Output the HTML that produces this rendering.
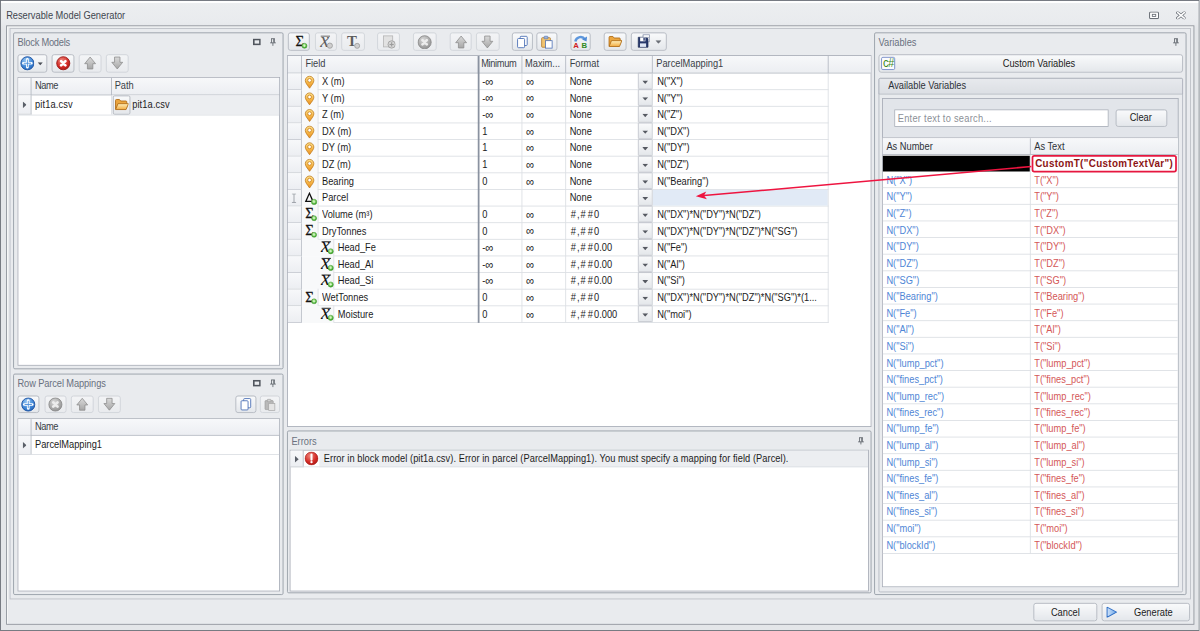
<!DOCTYPE html>
<html><head><meta charset="utf-8"><title>Reservable Model Generator</title>
<style>
html,body{margin:0;padding:0;width:1200px;height:631px;overflow:hidden;background:#e9ebee}
#w{position:absolute;left:0;top:0;width:1371.43px;height:721.15px;transform:scale(.875);transform-origin:0 0;
 font-family:"Liberation Sans",sans-serif;font-size:11.5px;color:#1c1c1c;background:#e9ebee;overflow:hidden}
#w div,#w svg{position:absolute;box-sizing:border-box}
.t{white-space:nowrap;height:16px;line-height:16px;transform:scaleX(.9217);transform-origin:0 50%}
.cap{color:#6a7180}
.win{border:1.3px solid #676c73;background:linear-gradient(#fff 0,#fff 2.2px,#eceef0 2.6px,#e9ebee 24px,#e4e6e9 32px,#e4e6e9 100%)}
.fr1{border:1.1px solid #8e939b;box-shadow:inset 1px 1px 0 #f6f7f8;background:#e9ebee}
.fr2{border:1px solid #bcc0c7}
.pn{border:1px solid #959ba5;border-radius:2px;background:#e9ebee}
.gr{border:1px solid #a9aeb8;background:#fff}
.hd{background:linear-gradient(#f7f8fa,#eceef2);border-bottom:1px solid #b4b9c2}
.hc{border-right:1px solid #b4b9c2}
.btn{border:1px solid #b3b8c0;border-radius:3px;background:linear-gradient(#f9fafb,#e4e7eb)}
.btd{border:1px solid #d0d3d9;border-radius:3px;background:linear-gradient(#f3f4f6,#e9ebee)}
.ind{background:linear-gradient(#f7f8fa,#eceef2);border-right:1px solid #b4b9c2;border-bottom:1px solid #c5c9d0}
.hl{background:#dcdfe4}
.vl{background:#dcdfe4}
.nb{color:#4f86d6}
.tr{color:#d45757}
.inf{font-size:14.2px;line-height:10px;position:relative;top:.6px}
.h{padding:0 1.3px}

</style></head>
<body>
<div id="w">
<svg class="i" width="0" height="0" style="left:0;top:0"><defs>
<radialGradient id="gB" cx=".4" cy=".3" r=".8"><stop offset="0" stop-color="#9ccbf5"/><stop offset=".6" stop-color="#3f86d6"/><stop offset="1" stop-color="#1f5fb4"/></radialGradient>
<radialGradient id="gR" cx=".4" cy=".3" r=".8"><stop offset="0" stop-color="#f08a80"/><stop offset=".6" stop-color="#d32a25"/><stop offset="1" stop-color="#a51512"/></radialGradient>
<radialGradient id="gG" cx=".4" cy=".3" r=".8"><stop offset="0" stop-color="#d6d6d6"/><stop offset=".6" stop-color="#a9a9a9"/><stop offset="1" stop-color="#8e8e8e"/></radialGradient>
<radialGradient id="gGr" cx=".4" cy=".3" r=".8"><stop offset="0" stop-color="#b8ec9a"/><stop offset=".7" stop-color="#4fb23a"/><stop offset="1" stop-color="#2f8a22"/></radialGradient>
<linearGradient id="gO" x1="0" y1="0" x2="0" y2="1"><stop offset="0" stop-color="#fde28e"/><stop offset=".55" stop-color="#f6b445"/><stop offset="1" stop-color="#ea8f22"/></linearGradient>
<linearGradient id="gF" x1="0" y1="0" x2="0" y2="1"><stop offset="0" stop-color="#fff0bd"/><stop offset="1" stop-color="#f2ad42"/></linearGradient>
<linearGradient id="gP" x1="0" y1="0" x2="1" y2="0"><stop offset="0" stop-color="#cfe3fa"/><stop offset="1" stop-color="#6ea6e6"/></linearGradient>
<linearGradient id="gA" x1="0" y1="0" x2="0" y2="1"><stop offset="0" stop-color="#dadada"/><stop offset="1" stop-color="#a6a6a6"/></linearGradient>
</defs></svg>
<div class="win" style="left:0.00px;top:0.00px;width:1371.43px;height:721.15px;"></div>
<div class="t " style="left:7.00px;top:10.30px;color:#41464e">Reservable Model Generator</div>
<svg class="i" style="left:1312.80px;top:12.57px" width="11.77" height="9.14" viewBox="0 0 12 9.2"><rect x=".8" y=".8" width="10.4" height="7.6" rx="1.2" fill="#fff" stroke="#6a6f77" stroke-width="1.2"/><rect x="4" y="3.4" width="4" height="2.4" fill="#fff" stroke="#6a6f77" stroke-width="1"/></svg>
<svg class="i" style="left:1344.00px;top:12.57px" width="11.43" height="9.14" viewBox="0 0 12 10.2"><path d="M1.8 1.6l8.4 7M10.2 1.6l-8.4 7" stroke="#6a6f77" stroke-width="3.8" stroke-linecap="square"/><path d="M1.8 1.6l8.4 7M10.2 1.6l-8.4 7" stroke="#fff" stroke-width="2" stroke-linecap="square"/></svg>
<div class="fr1" style="left:7.09px;top:29.03px;width:1357.71px;height:685.26px;"></div>
<div class="fr2" style="left:10.51px;top:32.46px;width:1350.63px;height:652.57px;"></div>
<div class="pn" style="left:14.97px;top:36.91px;width:308.91px;height:385.03px;"></div>
<div class="t cap" style="left:20.11px;top:40.66px;;letter-spacing:-0.28px;">Block Models</div>
<svg class="i" style="left:308.34px;top:43.43px" width="7.77" height="9.83" viewBox="0 0 9 11"><path d="M2.2 1.2h4.8M2.7 1.2v5.4M6.4 1.2v5.4M5.6 1.6v4.6M.8 6.7h7.6M4.5 6.7v4" fill="none" stroke="#50555d" stroke-width="1"/></svg>
<svg class="i" style="left:289.37px;top:44.11px" width="9.14" height="7.89" viewBox="0 0 9 7.6"><rect x="1" y="1" width="7" height="5.6" fill="none" stroke="#50555d" stroke-width="1.9"/></svg>
<div class="btn" style="left:19.66px;top:61.94px;width:34.29px;height:20.69px;"></div>
<svg class="i" style="left:22.56px;top:64.39px" width="16.60" height="16.60" viewBox="0 0 16 16"><circle cx="8" cy="8" r="7.2" fill="url(#gB)" stroke="#2458a6" stroke-width="1.1"/><path d="M8 3.6v8.8M3.6 8h8.8" stroke="#fff" stroke-width="3" stroke-linecap="round"/><path d="M8 4.4v7.2M4.4 8h7.2" stroke="#4d8fdc" stroke-width="1" stroke-linecap="round"/></svg>
<svg class="i" style="left:42.97px;top:71.09px" width="6.00" height="3.60" viewBox="0 0 6 3.4"><path d="M0 0h6L3 3.4z" fill="#4c5058"/></svg>
<div class="btn" style="left:59.43px;top:61.94px;width:25.60px;height:20.69px;"></div>
<svg class="i" style="left:63.93px;top:64.39px" width="16.60" height="16.60" viewBox="0 0 16 16"><circle cx="8" cy="8" r="7.2" fill="url(#gR)" stroke="#9b1a17" stroke-width="1"/><path d="M5.6 5.6l4.8 4.8M10.4 5.6l-4.8 4.8" stroke="#fff" stroke-width="2.9" stroke-linecap="round"/></svg>
<div class="btd" style="left:90.29px;top:61.94px;width:25.60px;height:20.69px;"></div>
<svg class="i" style="left:95.09px;top:64.29px" width="16.00" height="16.00" viewBox="0 0 16 16"><path d="M8 1.2L14.2 8.8H11.1V14.8H4.9V8.8H1.8z" fill="url(#gA)" stroke="#8e8e8e" stroke-width=".9" stroke-linejoin="round"/></svg>
<div class="btd" style="left:121.14px;top:61.94px;width:25.60px;height:20.69px;"></div>
<svg class="i" style="left:125.94px;top:64.29px" width="16.00" height="16.00" viewBox="0 0 16 16"><path d="M8 14.8L14.2 7.2H11.1V1.2H4.9V7.2H1.8z" fill="url(#gA)" stroke="#8e8e8e" stroke-width=".9" stroke-linejoin="round"/></svg>
<div class="gr" style="left:19.54px;top:88.00px;width:300.23px;height:329.83px;"></div>
<div class="hd" style="left:20.54px;top:89.00px;width:298.23px;height:20.00px;"></div>
<div class="hc" style="left:20.54px;top:89.00px;width:15.23px;height:20.00px;"></div>
<div class="hc" style="left:20.54px;top:89.00px;width:107.57px;height:20.00px;"></div>
<div class="t " style="left:40.00px;top:89.69px;color:#3a3f47;letter-spacing:-0.5px;">Name</div>
<div class="t " style="left:131.43px;top:89.69px;color:#3a3f47">Path</div>
<div class="ind" style="left:20.54px;top:109.00px;width:15.23px;height:22.40px;"></div>
<svg class="i" style="left:25.94px;top:116.20px" width="4.40" height="7.60" viewBox="0 0 4 7"><path d="M0 0v7L4 3.5z" fill="#5a5f68"/></svg>
<div class="" style="left:128.11px;top:109.00px;width:190.66px;height:22.40px;background:#eceef1"></div>
<div class="hl" style="left:20.54px;top:131.20px;width:298.23px;height:1.00px;"></div>
<div class="vl" style="left:127.11px;top:109.00px;width:1.00px;height:22.40px;"></div>
<div class="btn" style="left:129.14px;top:108.80px;width:20.11px;height:21.94px;border-radius:2px"></div>
<svg class="i" style="left:130.90px;top:111.47px" width="16.60" height="16.60" viewBox="0 0 16 16"><path d="M1 13.4V3.6a1 1 0 0 1 1-1h3.3l1.4 1.7h5.7a1 1 0 0 1 1 1V7.4" fill="#eba63f" stroke="#b36f1a" stroke-width="1"/><path d="M1.1 13.7L3.7 7.2h11.6l-2.7 6.5z" fill="url(#gF)" stroke="#b36f1a" stroke-width="1" stroke-linejoin="round"/></svg>
<div class="t " style="left:40.00px;top:111.40px;;letter-spacing:0.16px;">pit1a.csv</div>
<div class="t " style="left:151.31px;top:111.40px;;letter-spacing:0.16px;">pit1a.csv</div>
<div class="pn" style="left:14.97px;top:426.74px;width:308.91px;height:252.80px;"></div>
<div class="t cap" style="left:20.11px;top:430.49px;;letter-spacing:-0.13px;">Row Parcel Mappings</div>
<svg class="i" style="left:308.34px;top:433.26px" width="7.77" height="9.83" viewBox="0 0 9 11"><path d="M2.2 1.2h4.8M2.7 1.2v5.4M6.4 1.2v5.4M5.6 1.6v4.6M.8 6.7h7.6M4.5 6.7v4" fill="none" stroke="#50555d" stroke-width="1"/></svg>
<svg class="i" style="left:289.37px;top:433.94px" width="9.14" height="7.89" viewBox="0 0 9 7.6"><rect x="1" y="1" width="7" height="5.6" fill="none" stroke="#50555d" stroke-width="1.9"/></svg>
<div class="btn" style="left:19.89px;top:452.11px;width:25.60px;height:20.34px;"></div>
<svg class="i" style="left:24.39px;top:454.39px" width="16.60" height="16.60" viewBox="0 0 16 16"><circle cx="8" cy="8" r="7.2" fill="url(#gB)" stroke="#2458a6" stroke-width="1.1"/><path d="M8 3.6v8.8M3.6 8h8.8" stroke="#fff" stroke-width="3" stroke-linecap="round"/><path d="M8 4.4v7.2M4.4 8h7.2" stroke="#4d8fdc" stroke-width="1" stroke-linecap="round"/></svg>
<div class="btd" style="left:50.74px;top:452.11px;width:25.60px;height:20.34px;"></div>
<svg class="i" style="left:55.24px;top:454.39px" width="16.60" height="16.60" viewBox="0 0 16 16"><circle cx="8" cy="8" r="7.2" fill="url(#gG)" stroke="#8c8c8c" stroke-width="1"/><path d="M5.6 5.6l4.8 4.8M10.4 5.6l-4.8 4.8" stroke="#ececec" stroke-width="2.9" stroke-linecap="round"/></svg>
<div class="btd" style="left:81.37px;top:452.11px;width:25.60px;height:20.34px;"></div>
<svg class="i" style="left:86.17px;top:454.29px" width="16.00" height="16.00" viewBox="0 0 16 16"><path d="M8 1.2L14.2 8.8H11.1V14.8H4.9V8.8H1.8z" fill="url(#gA)" stroke="#8e8e8e" stroke-width=".9" stroke-linejoin="round"/></svg>
<div class="btd" style="left:112.23px;top:452.11px;width:25.83px;height:20.34px;"></div>
<svg class="i" style="left:117.14px;top:454.29px" width="16.00" height="16.00" viewBox="0 0 16 16"><path d="M8 14.8L14.2 7.2H11.1V1.2H4.9V7.2H1.8z" fill="url(#gA)" stroke="#8e8e8e" stroke-width=".9" stroke-linejoin="round"/></svg>
<div class="btn" style="left:268.57px;top:452.11px;width:24.69px;height:20.34px;"></div>
<svg class="i" style="left:272.91px;top:454.29px" width="16.00" height="16.00" viewBox="0 0 16 16"><rect x="5.5" y="1.5" width="8" height="10.5" rx="1" fill="#fff" stroke="#4a6fb5" stroke-width="1"/><rect x="2.5" y="4" width="8" height="10.5" rx="1" fill="#fff" stroke="#4a6fb5" stroke-width="1"/></svg>
<div class="btd" style="left:296.69px;top:452.11px;width:23.09px;height:20.34px;"></div>
<svg class="i" style="left:300.73px;top:454.79px" width="15.00" height="15.00" viewBox="0 0 16 16"><rect x="2" y="3" width="10" height="11" rx="1" fill="#b9b9b9" stroke="#999" stroke-width=".8"/><rect x="4.8" y="1.4" width="4.4" height="3" rx=".8" fill="#d0d0d0" stroke="#999" stroke-width=".7"/><rect x="6.5" y="6.5" width="7.5" height="8.5" fill="#e4e4e4" stroke="#a4a4a4" stroke-width=".8"/></svg>
<div class="gr" style="left:19.54px;top:477.71px;width:300.23px;height:198.51px;"></div>
<div class="hd" style="left:20.54px;top:478.71px;width:298.23px;height:19.11px;"></div>
<div class="hc" style="left:20.54px;top:478.71px;width:15.23px;height:19.11px;"></div>
<div class="t " style="left:40.00px;top:479.17px;color:#3a3f47;letter-spacing:-0.5px;">Name</div>
<div class="ind" style="left:20.54px;top:497.83px;width:15.23px;height:22.63px;"></div>
<svg class="i" style="left:25.94px;top:505.43px" width="4.40" height="7.60" viewBox="0 0 4 7"><path d="M0 0v7L4 3.5z" fill="#5a5f68"/></svg>
<div class="hl" style="left:20.54px;top:519.46px;width:298.23px;height:1.00px;"></div>
<div class="t " style="left:40.00px;top:500.43px;">ParcelMapping1</div>
<div class="btn" style="left:328.57px;top:36.91px;width:25.71px;height:21.37px;"></div>
<svg class="i" style="left:334.73px;top:39.10px" width="17.00" height="17.00" viewBox="0 0 16 16"><text x="2.6" y="12.8" font-family="Liberation Serif,serif" font-size="16" fill="#111" stroke="#111" stroke-width=".3">Σ</text><circle cx="12.2" cy="12.6" r="2.7" fill="url(#gGr)" stroke="#3c9a2c" stroke-width=".5"/><path d="M10.899999999999999 12.6h2.6M12.2 11.299999999999999v2.6" stroke="#e9ffe0" stroke-width=".7"/></svg>
<div class="btd" style="left:359.54px;top:36.91px;width:25.60px;height:21.37px;"></div>
<svg class="i" style="left:363.84px;top:39.10px" width="17.00" height="17.00" viewBox="0 0 16 16"><path d="M2.4 2.2h10" stroke="#5e5e5e" stroke-width="1"/><text x="1.8" y="13.4" font-family="Liberation Serif,serif" font-style="italic" font-size="21.5" fill="#5e5e5e">x</text><circle cx="12.2" cy="12.4" r="2.8" fill="#cfcfcf" stroke="#9d9d9d" stroke-width=".9"/></svg>
<div class="btd" style="left:390.29px;top:36.91px;width:26.29px;height:21.37px;"></div>
<svg class="i" style="left:394.93px;top:39.10px" width="17.00" height="17.00" viewBox="0 0 16 16"><text x="1.4" y="13" font-family="Liberation Serif,serif" font-weight="bold" font-size="16" fill="#5c5c5c">T</text><circle cx="12.4" cy="12.6" r="2.7" fill="#cfcfcf" stroke="#9d9d9d" stroke-width=".9"/></svg>
<div class="btd" style="left:431.43px;top:36.91px;width:25.71px;height:21.37px;"></div>
<svg class="i" style="left:435.69px;top:39.60px" width="16.00" height="16.00" viewBox="0 0 16 16"><rect x="2.2" y="1" width="10.6" height="12.6" fill="#e2e2e2" stroke="#b4b4b4" stroke-width=".9"/><circle cx="11.6" cy="10.8" r="4.2" fill="#d4d4d4" stroke="#9a9a9a" stroke-width=".9"/><path d="M9.2 10.8h4.8M11.6 8.4v4.8" stroke="#9c9c9c" stroke-width="1.3"/></svg>
<div class="btd" style="left:472.00px;top:36.91px;width:26.86px;height:21.37px;"></div>
<svg class="i" style="left:477.13px;top:39.70px" width="16.60" height="16.60" viewBox="0 0 16 16"><circle cx="8" cy="8" r="7.2" fill="url(#gG)" stroke="#8c8c8c" stroke-width="1"/><path d="M5.6 5.6l4.8 4.8M10.4 5.6l-4.8 4.8" stroke="#ececec" stroke-width="2.9" stroke-linecap="round"/></svg>
<div class="btd" style="left:513.60px;top:36.91px;width:25.83px;height:21.37px;"></div>
<svg class="i" style="left:518.51px;top:39.60px" width="16.00" height="16.00" viewBox="0 0 16 16"><path d="M8 1.2L14.2 8.8H11.1V14.8H4.9V8.8H1.8z" fill="url(#gA)" stroke="#8e8e8e" stroke-width=".9" stroke-linejoin="round"/></svg>
<div class="btd" style="left:544.00px;top:36.91px;width:26.74px;height:21.37px;"></div>
<svg class="i" style="left:549.37px;top:39.60px" width="16.00" height="16.00" viewBox="0 0 16 16"><path d="M8 14.8L14.2 7.2H11.1V1.2H4.9V7.2H1.8z" fill="url(#gA)" stroke="#8e8e8e" stroke-width=".9" stroke-linejoin="round"/></svg>
<div class="btn" style="left:585.14px;top:36.91px;width:23.54px;height:21.37px;"></div>
<svg class="i" style="left:588.91px;top:39.60px" width="16.00" height="16.00" viewBox="0 0 16 16"><rect x="5.5" y="1.5" width="8" height="10.5" rx="1" fill="#fff" stroke="#4a6fb5" stroke-width="1"/><rect x="2.5" y="4" width="8" height="10.5" rx="1" fill="#fff" stroke="#4a6fb5" stroke-width="1"/></svg>
<div class="btn" style="left:613.26px;top:36.91px;width:23.31px;height:21.37px;"></div>
<svg class="i" style="left:616.91px;top:39.60px" width="16.00" height="16.00" viewBox="0 0 16 16"><rect x="2" y="3" width="10" height="11" rx="1" fill="#f2c470" stroke="#b07a2e" stroke-width=".9"/><rect x="4.8" y="1.4" width="4.4" height="3" rx=".8" fill="#9fb4d6" stroke="#4a6fb5" stroke-width=".7"/><rect x="6.5" y="6.5" width="7.5" height="8.5" fill="#fff" stroke="#4a6fb5" stroke-width=".9"/></svg>
<div class="btn" style="left:651.77px;top:36.91px;width:23.66px;height:21.37px;"></div>
<svg class="i" style="left:655.35px;top:39.35px" width="16.50" height="16.50" viewBox="0 0 16 16"><path d="M2.4 8.2C3.6 2.6 10.4 1.6 13 5.8" fill="none" stroke="#5e97dd" stroke-width="2.7"/><path d="M15.4 2.6l-.5 5.6-5-2.2z" fill="#4f8bd6"/><text x=".2" y="15.8" font-family="Liberation Sans,sans-serif" font-weight="bold" font-size="8.6" fill="#cf2020">A</text><text x="9.4" y="15.8" font-family="Liberation Sans,sans-serif" font-weight="bold" font-size="8.6" fill="#2f8a22">B</text></svg>
<div class="btn" style="left:689.71px;top:36.91px;width:26.63px;height:21.37px;"></div>
<svg class="i" style="left:694.78px;top:39.35px" width="16.50" height="16.50" viewBox="0 0 16 16"><path d="M1 13.4V3.6a1 1 0 0 1 1-1h3.3l1.4 1.7h5.7a1 1 0 0 1 1 1V7.4" fill="#eba63f" stroke="#b36f1a" stroke-width="1"/><path d="M1.1 13.7L3.7 7.2h11.6l-2.7 6.5z" fill="url(#gF)" stroke="#b36f1a" stroke-width="1" stroke-linejoin="round"/></svg>
<div class="btn" style="left:720.57px;top:36.91px;width:41.71px;height:21.37px;"></div>
<svg class="i" style="left:727.54px;top:39.09px" width="16.00" height="16.00" viewBox="0 0 16 16"><rect x="7" y=".8" width="7.4" height="8" fill="#fff" stroke="#8a94ad" stroke-width=".8"/><path d="M1.4 3.6h9.6L12.6 5V15H1.4z" fill="#27386b" stroke="#1b2950" stroke-width=".7"/><rect x="3.6" y="3.8" width="6" height="4.4" fill="#fff"/><rect x="7.3" y="4.3" width="1.6" height="3.2" fill="#27386b"/><rect x="3.4" y="10.6" width="7" height="4" fill="#dfe6f4"/><rect x="7" y=".8" width="7.4" height="2.8" fill="#fff" stroke="#8a94ad" stroke-width=".8"/></svg>
<svg class="i" style="left:748.80px;top:46.17px" width="7.00" height="4.00" viewBox="0 0 6 3.4"><path d="M0 0h6L3 3.4z" fill="#6c7078"/></svg>
<div class="gr" style="left:328.34px;top:63.09px;width:667.66px;height:424.91px;"></div>
<div class="hd" style="left:329.34px;top:64.09px;width:665.66px;height:19.80px;"></div>
<div class="" style="left:343.69px;top:64.09px;width:1.00px;height:19.80px;background:#b4b9c2"></div>
<div class="" style="left:546.43px;top:64.09px;width:1.00px;height:19.80px;background:#b4b9c2"></div>
<div class="" style="left:596.14px;top:64.09px;width:1.00px;height:19.80px;background:#b4b9c2"></div>
<div class="" style="left:645.63px;top:64.09px;width:1.00px;height:19.80px;background:#b4b9c2"></div>
<div class="" style="left:745.06px;top:64.09px;width:1.00px;height:19.80px;background:#b4b9c2"></div>
<div class="" style="left:945.74px;top:64.09px;width:1.00px;height:19.80px;background:#b4b9c2"></div>
<div class="t " style="left:348.57px;top:64.43px;color:#3a3f47">Field</div>
<div class="t " style="left:550.40px;top:64.43px;color:#3a3f47;letter-spacing:-0.45px;">Minimum</div>
<div class="t " style="left:600.46px;top:64.43px;color:#3a3f47">Maxim...</div>
<div class="t " style="left:650.74px;top:64.43px;color:#3a3f47">Format</div>
<div class="t " style="left:750.40px;top:64.43px;color:#3a3f47">ParcelMapping1</div>
<div class="ind" style="left:329.34px;top:83.89px;width:15.34px;height:19.00px;"></div>
<div class="" style="left:344.69px;top:83.89px;width:18.74px;height:19.00px;background:#f8f9fa"></div>
<div class="vl" style="left:362.93px;top:83.39px;width:1.00px;height:19.00px;"></div>
<div class="hl" style="left:363.43px;top:101.89px;width:583.31px;height:1.00px;"></div>
<svg class="i" style="left:345.89px;top:85.99px" width="15.60" height="15.60" viewBox="0 0 16 16"><path d="M8 15.2C5.2 11.2 3 8.8 3 6.2a5 5 0 0 1 10 0c0 2.6-2.2 5-5 9z" fill="url(#gO)" stroke="#bf7a1c" stroke-width=".9"/><circle cx="8" cy="6" r="2.2" fill="#fff" stroke="#cf8a24" stroke-width="1.1"/></svg>
<div class="t " style="left:367.63px;top:84.99px;">X (m)</div>
<div class="t " style="left:550.63px;top:84.99px;">-<span class="inf">∞</span></div>
<div class="t " style="left:600.69px;top:84.99px;"><span class="inf">∞</span></div>
<div class="t " style="left:650.97px;top:84.99px;">None</div>
<div class="t " style="left:750.63px;top:84.99px;">N("X")</div>
<div class="btn" style="left:729.49px;top:83.29px;width:16.57px;height:19.20px;border-radius:1px;border-color:#c0c4cb"></div>
<svg class="i" style="left:734.31px;top:91.79px" width="6.80" height="4.00" viewBox="0 0 6 3.4"><path d="M0 0h6L3 3.4z" fill="#565a62"/></svg>
<div class="ind" style="left:329.34px;top:102.89px;width:15.34px;height:19.00px;"></div>
<div class="" style="left:344.69px;top:102.89px;width:18.74px;height:19.00px;background:#f8f9fa"></div>
<div class="vl" style="left:362.93px;top:102.39px;width:1.00px;height:19.00px;"></div>
<div class="hl" style="left:363.43px;top:120.89px;width:583.31px;height:1.00px;"></div>
<svg class="i" style="left:345.89px;top:104.99px" width="15.60" height="15.60" viewBox="0 0 16 16"><path d="M8 15.2C5.2 11.2 3 8.8 3 6.2a5 5 0 0 1 10 0c0 2.6-2.2 5-5 9z" fill="url(#gO)" stroke="#bf7a1c" stroke-width=".9"/><circle cx="8" cy="6" r="2.2" fill="#fff" stroke="#cf8a24" stroke-width="1.1"/></svg>
<div class="t " style="left:367.63px;top:103.99px;">Y (m)</div>
<div class="t " style="left:550.63px;top:103.99px;">-<span class="inf">∞</span></div>
<div class="t " style="left:600.69px;top:103.99px;"><span class="inf">∞</span></div>
<div class="t " style="left:650.97px;top:103.99px;">None</div>
<div class="t " style="left:750.63px;top:103.99px;">N("Y")</div>
<div class="btn" style="left:729.49px;top:102.29px;width:16.57px;height:19.20px;border-radius:1px;border-color:#c0c4cb"></div>
<svg class="i" style="left:734.31px;top:110.79px" width="6.80" height="4.00" viewBox="0 0 6 3.4"><path d="M0 0h6L3 3.4z" fill="#565a62"/></svg>
<div class="ind" style="left:329.34px;top:121.89px;width:15.34px;height:19.00px;"></div>
<div class="" style="left:344.69px;top:121.89px;width:18.74px;height:19.00px;background:#f8f9fa"></div>
<div class="vl" style="left:362.93px;top:121.39px;width:1.00px;height:19.00px;"></div>
<div class="hl" style="left:363.43px;top:139.89px;width:583.31px;height:1.00px;"></div>
<svg class="i" style="left:345.89px;top:123.99px" width="15.60" height="15.60" viewBox="0 0 16 16"><path d="M8 15.2C5.2 11.2 3 8.8 3 6.2a5 5 0 0 1 10 0c0 2.6-2.2 5-5 9z" fill="url(#gO)" stroke="#bf7a1c" stroke-width=".9"/><circle cx="8" cy="6" r="2.2" fill="#fff" stroke="#cf8a24" stroke-width="1.1"/></svg>
<div class="t " style="left:367.63px;top:122.99px;">Z (m)</div>
<div class="t " style="left:550.63px;top:122.99px;">-<span class="inf">∞</span></div>
<div class="t " style="left:600.69px;top:122.99px;"><span class="inf">∞</span></div>
<div class="t " style="left:650.97px;top:122.99px;">None</div>
<div class="t " style="left:750.63px;top:122.99px;">N("Z")</div>
<div class="btn" style="left:729.49px;top:121.29px;width:16.57px;height:19.20px;border-radius:1px;border-color:#c0c4cb"></div>
<svg class="i" style="left:734.31px;top:129.79px" width="6.80" height="4.00" viewBox="0 0 6 3.4"><path d="M0 0h6L3 3.4z" fill="#565a62"/></svg>
<div class="ind" style="left:329.34px;top:140.89px;width:15.34px;height:19.00px;"></div>
<div class="" style="left:344.69px;top:140.89px;width:18.74px;height:19.00px;background:#f8f9fa"></div>
<div class="vl" style="left:362.93px;top:140.39px;width:1.00px;height:19.00px;"></div>
<div class="hl" style="left:363.43px;top:158.89px;width:583.31px;height:1.00px;"></div>
<svg class="i" style="left:345.89px;top:142.99px" width="15.60" height="15.60" viewBox="0 0 16 16"><path d="M8 15.2C5.2 11.2 3 8.8 3 6.2a5 5 0 0 1 10 0c0 2.6-2.2 5-5 9z" fill="url(#gO)" stroke="#bf7a1c" stroke-width=".9"/><circle cx="8" cy="6" r="2.2" fill="#fff" stroke="#cf8a24" stroke-width="1.1"/></svg>
<div class="t " style="left:367.63px;top:141.99px;">DX (m)</div>
<div class="t " style="left:550.63px;top:141.99px;">1</div>
<div class="t " style="left:600.69px;top:141.99px;"><span class="inf">∞</span></div>
<div class="t " style="left:650.97px;top:141.99px;">None</div>
<div class="t " style="left:750.63px;top:141.99px;">N("DX")</div>
<div class="btn" style="left:729.49px;top:140.29px;width:16.57px;height:19.20px;border-radius:1px;border-color:#c0c4cb"></div>
<svg class="i" style="left:734.31px;top:148.79px" width="6.80" height="4.00" viewBox="0 0 6 3.4"><path d="M0 0h6L3 3.4z" fill="#565a62"/></svg>
<div class="ind" style="left:329.34px;top:159.89px;width:15.34px;height:19.00px;"></div>
<div class="" style="left:344.69px;top:159.89px;width:18.74px;height:19.00px;background:#f8f9fa"></div>
<div class="vl" style="left:362.93px;top:159.39px;width:1.00px;height:19.00px;"></div>
<div class="hl" style="left:363.43px;top:177.89px;width:583.31px;height:1.00px;"></div>
<svg class="i" style="left:345.89px;top:161.99px" width="15.60" height="15.60" viewBox="0 0 16 16"><path d="M8 15.2C5.2 11.2 3 8.8 3 6.2a5 5 0 0 1 10 0c0 2.6-2.2 5-5 9z" fill="url(#gO)" stroke="#bf7a1c" stroke-width=".9"/><circle cx="8" cy="6" r="2.2" fill="#fff" stroke="#cf8a24" stroke-width="1.1"/></svg>
<div class="t " style="left:367.63px;top:160.99px;">DY (m)</div>
<div class="t " style="left:550.63px;top:160.99px;">1</div>
<div class="t " style="left:600.69px;top:160.99px;"><span class="inf">∞</span></div>
<div class="t " style="left:650.97px;top:160.99px;">None</div>
<div class="t " style="left:750.63px;top:160.99px;">N("DY")</div>
<div class="btn" style="left:729.49px;top:159.29px;width:16.57px;height:19.20px;border-radius:1px;border-color:#c0c4cb"></div>
<svg class="i" style="left:734.31px;top:167.79px" width="6.80" height="4.00" viewBox="0 0 6 3.4"><path d="M0 0h6L3 3.4z" fill="#565a62"/></svg>
<div class="ind" style="left:329.34px;top:178.89px;width:15.34px;height:19.00px;"></div>
<div class="" style="left:344.69px;top:178.89px;width:18.74px;height:19.00px;background:#f8f9fa"></div>
<div class="vl" style="left:362.93px;top:178.39px;width:1.00px;height:19.00px;"></div>
<div class="hl" style="left:363.43px;top:196.89px;width:583.31px;height:1.00px;"></div>
<svg class="i" style="left:345.89px;top:180.99px" width="15.60" height="15.60" viewBox="0 0 16 16"><path d="M8 15.2C5.2 11.2 3 8.8 3 6.2a5 5 0 0 1 10 0c0 2.6-2.2 5-5 9z" fill="url(#gO)" stroke="#bf7a1c" stroke-width=".9"/><circle cx="8" cy="6" r="2.2" fill="#fff" stroke="#cf8a24" stroke-width="1.1"/></svg>
<div class="t " style="left:367.63px;top:179.99px;">DZ (m)</div>
<div class="t " style="left:550.63px;top:179.99px;">1</div>
<div class="t " style="left:600.69px;top:179.99px;"><span class="inf">∞</span></div>
<div class="t " style="left:650.97px;top:179.99px;">None</div>
<div class="t " style="left:750.63px;top:179.99px;">N("DZ")</div>
<div class="btn" style="left:729.49px;top:178.29px;width:16.57px;height:19.20px;border-radius:1px;border-color:#c0c4cb"></div>
<svg class="i" style="left:734.31px;top:186.79px" width="6.80" height="4.00" viewBox="0 0 6 3.4"><path d="M0 0h6L3 3.4z" fill="#565a62"/></svg>
<div class="ind" style="left:329.34px;top:197.89px;width:15.34px;height:19.00px;"></div>
<div class="" style="left:344.69px;top:197.89px;width:18.74px;height:19.00px;background:#f8f9fa"></div>
<div class="vl" style="left:362.93px;top:197.39px;width:1.00px;height:19.00px;"></div>
<div class="hl" style="left:363.43px;top:215.89px;width:583.31px;height:1.00px;"></div>
<svg class="i" style="left:345.89px;top:199.99px" width="15.60" height="15.60" viewBox="0 0 16 16"><path d="M8 15.2C5.2 11.2 3 8.8 3 6.2a5 5 0 0 1 10 0c0 2.6-2.2 5-5 9z" fill="url(#gO)" stroke="#bf7a1c" stroke-width=".9"/><circle cx="8" cy="6" r="2.2" fill="#fff" stroke="#cf8a24" stroke-width="1.1"/></svg>
<div class="t " style="left:367.63px;top:198.99px;">Bearing</div>
<div class="t " style="left:550.63px;top:198.99px;">0</div>
<div class="t " style="left:600.69px;top:198.99px;"><span class="inf">∞</span></div>
<div class="t " style="left:650.97px;top:198.99px;">None</div>
<div class="t " style="left:750.63px;top:198.99px;">N("Bearing")</div>
<div class="btn" style="left:729.49px;top:197.29px;width:16.57px;height:19.20px;border-radius:1px;border-color:#c0c4cb"></div>
<svg class="i" style="left:734.31px;top:205.79px" width="6.80" height="4.00" viewBox="0 0 6 3.4"><path d="M0 0h6L3 3.4z" fill="#565a62"/></svg>
<div class="ind" style="left:329.34px;top:216.89px;width:15.34px;height:19.00px;"></div>
<div class="" style="left:344.69px;top:216.89px;width:18.74px;height:19.00px;background:#f8f9fa"></div>
<div class="vl" style="left:362.93px;top:216.39px;width:1.00px;height:19.00px;"></div>
<div class="hl" style="left:363.43px;top:234.89px;width:583.31px;height:1.00px;"></div>
<div class="" style="left:746.06px;top:216.89px;width:199.69px;height:18.00px;background:#e1eaf6"></div>
<svg class="i" style="left:346.49px;top:218.29px" width="17.00" height="17.00" viewBox="0 0 16 16"><path d="M7.2 1L12.2 12H2.2zM7.2 4.2L4.4 10.7h5.4z" fill="#111" fill-rule="evenodd"/><circle cx="12.2" cy="12" r="2.9" fill="url(#gGr)" stroke="#3c9a2c" stroke-width=".5"/><path d="M10.899999999999999 12h2.6M12.2 10.7v2.6" stroke="#e9ffe0" stroke-width=".7"/></svg>
<div class="t " style="left:367.63px;top:217.99px;">Parcel</div>
<div class="t " style="left:650.97px;top:217.99px;">None</div>
<div class="btn" style="left:729.49px;top:216.29px;width:16.57px;height:19.20px;border-radius:1px;border-color:#c0c4cb"></div>
<svg class="i" style="left:734.31px;top:224.79px" width="6.80" height="4.00" viewBox="0 0 6 3.4"><path d="M0 0h6L3 3.4z" fill="#565a62"/></svg>
<div class="ind" style="left:329.34px;top:235.89px;width:15.34px;height:19.00px;"></div>
<div class="" style="left:344.69px;top:235.89px;width:18.74px;height:19.00px;background:#f8f9fa"></div>
<div class="vl" style="left:362.93px;top:235.39px;width:1.00px;height:19.00px;"></div>
<div class="hl" style="left:363.43px;top:253.89px;width:583.31px;height:1.00px;"></div>
<svg class="i" style="left:346.49px;top:236.29px" width="17.00" height="17.00" viewBox="0 0 16 16"><text x="2.6" y="12.8" font-family="Liberation Serif,serif" font-size="16" fill="#111" stroke="#111" stroke-width=".3">Σ</text><circle cx="12.2" cy="12.6" r="2.7" fill="url(#gGr)" stroke="#3c9a2c" stroke-width=".5"/><path d="M10.899999999999999 12.6h2.6M12.2 11.299999999999999v2.6" stroke="#e9ffe0" stroke-width=".7"/></svg>
<div class="t " style="left:367.63px;top:236.99px;">Volume (m³)</div>
<div class="t " style="left:550.63px;top:236.99px;">0</div>
<div class="t " style="left:600.69px;top:236.99px;"><span class="inf">∞</span></div>
<div class="t " style="left:650.97px;top:236.99px;"><span class="h">#</span>,<span class="h">#</span><span class="h">#</span>0</div>
<div class="t " style="left:750.63px;top:236.99px;">N("DX")*N("DY")*N("DZ")</div>
<div class="btn" style="left:729.49px;top:235.29px;width:16.57px;height:19.20px;border-radius:1px;border-color:#c0c4cb"></div>
<svg class="i" style="left:734.31px;top:243.79px" width="6.80" height="4.00" viewBox="0 0 6 3.4"><path d="M0 0h6L3 3.4z" fill="#565a62"/></svg>
<div class="ind" style="left:329.34px;top:254.89px;width:15.34px;height:19.00px;"></div>
<div class="" style="left:344.69px;top:254.89px;width:18.74px;height:19.00px;background:#f8f9fa"></div>
<div class="vl" style="left:362.93px;top:254.39px;width:1.00px;height:19.00px;"></div>
<div class="hl" style="left:363.43px;top:272.89px;width:583.31px;height:1.00px;"></div>
<svg class="i" style="left:346.49px;top:255.29px" width="17.00" height="17.00" viewBox="0 0 16 16"><text x="2.6" y="12.8" font-family="Liberation Serif,serif" font-size="16" fill="#111" stroke="#111" stroke-width=".3">Σ</text><circle cx="12.2" cy="12.6" r="2.7" fill="url(#gGr)" stroke="#3c9a2c" stroke-width=".5"/><path d="M10.899999999999999 12.6h2.6M12.2 11.299999999999999v2.6" stroke="#e9ffe0" stroke-width=".7"/></svg>
<div class="t " style="left:367.63px;top:255.99px;">DryTonnes</div>
<div class="t " style="left:550.63px;top:255.99px;">0</div>
<div class="t " style="left:600.69px;top:255.99px;"><span class="inf">∞</span></div>
<div class="t " style="left:650.97px;top:255.99px;"><span class="h">#</span>,<span class="h">#</span><span class="h">#</span>0</div>
<div class="t " style="left:750.63px;top:255.99px;">N("DX")*N("DY")*N("DZ")*N("SG")</div>
<div class="btn" style="left:729.49px;top:254.29px;width:16.57px;height:19.20px;border-radius:1px;border-color:#c0c4cb"></div>
<svg class="i" style="left:734.31px;top:262.79px" width="6.80" height="4.00" viewBox="0 0 6 3.4"><path d="M0 0h6L3 3.4z" fill="#565a62"/></svg>
<div class="ind" style="left:329.34px;top:273.89px;width:15.34px;height:19.00px;"></div>
<div class="" style="left:344.69px;top:273.89px;width:36.34px;height:19.00px;background:#f8f9fa"></div>
<div class="vl" style="left:380.53px;top:273.39px;width:1.00px;height:19.00px;"></div>
<div class="hl" style="left:381.03px;top:291.89px;width:565.71px;height:1.00px;"></div>
<svg class="i" style="left:365.19px;top:274.29px" width="17.00" height="17.00" viewBox="0 0 16 16"><path d="M2.4 2.2h10" stroke="#111" stroke-width="1"/><text x="1.8" y="13.4" font-family="Liberation Serif,serif" font-style="italic" font-size="21.5" fill="#111">x</text><circle cx="12.2" cy="12.4" r="2.8" fill="url(#gGr)" stroke="#3c9a2c" stroke-width=".5"/><path d="M10.899999999999999 12.4h2.6M12.2 11.1v2.6" stroke="#e9ffe0" stroke-width=".7"/></svg>
<div class="t " style="left:386.37px;top:274.99px;">Head_Fe</div>
<div class="t " style="left:550.63px;top:274.99px;">-<span class="inf">∞</span></div>
<div class="t " style="left:600.69px;top:274.99px;"><span class="inf">∞</span></div>
<div class="t " style="left:650.97px;top:274.99px;"><span class="h">#</span>,<span class="h">#</span><span class="h">#</span>0.00</div>
<div class="t " style="left:750.63px;top:274.99px;">N("Fe")</div>
<div class="btn" style="left:729.49px;top:273.29px;width:16.57px;height:19.20px;border-radius:1px;border-color:#c0c4cb"></div>
<svg class="i" style="left:734.31px;top:281.79px" width="6.80" height="4.00" viewBox="0 0 6 3.4"><path d="M0 0h6L3 3.4z" fill="#565a62"/></svg>
<div class="ind" style="left:329.34px;top:292.89px;width:15.34px;height:19.00px;"></div>
<div class="" style="left:344.69px;top:292.89px;width:36.34px;height:19.00px;background:#f8f9fa"></div>
<div class="vl" style="left:380.53px;top:292.39px;width:1.00px;height:19.00px;"></div>
<div class="hl" style="left:381.03px;top:310.89px;width:565.71px;height:1.00px;"></div>
<svg class="i" style="left:365.19px;top:293.29px" width="17.00" height="17.00" viewBox="0 0 16 16"><path d="M2.4 2.2h10" stroke="#111" stroke-width="1"/><text x="1.8" y="13.4" font-family="Liberation Serif,serif" font-style="italic" font-size="21.5" fill="#111">x</text><circle cx="12.2" cy="12.4" r="2.8" fill="url(#gGr)" stroke="#3c9a2c" stroke-width=".5"/><path d="M10.899999999999999 12.4h2.6M12.2 11.1v2.6" stroke="#e9ffe0" stroke-width=".7"/></svg>
<div class="t " style="left:386.37px;top:293.99px;">Head_Al</div>
<div class="t " style="left:550.63px;top:293.99px;">-<span class="inf">∞</span></div>
<div class="t " style="left:600.69px;top:293.99px;"><span class="inf">∞</span></div>
<div class="t " style="left:650.97px;top:293.99px;"><span class="h">#</span>,<span class="h">#</span><span class="h">#</span>0.00</div>
<div class="t " style="left:750.63px;top:293.99px;">N("Al")</div>
<div class="btn" style="left:729.49px;top:292.29px;width:16.57px;height:19.20px;border-radius:1px;border-color:#c0c4cb"></div>
<svg class="i" style="left:734.31px;top:300.79px" width="6.80" height="4.00" viewBox="0 0 6 3.4"><path d="M0 0h6L3 3.4z" fill="#565a62"/></svg>
<div class="ind" style="left:329.34px;top:311.89px;width:15.34px;height:19.00px;"></div>
<div class="" style="left:344.69px;top:311.89px;width:36.34px;height:19.00px;background:#f8f9fa"></div>
<div class="vl" style="left:380.53px;top:311.39px;width:1.00px;height:19.00px;"></div>
<div class="hl" style="left:381.03px;top:329.89px;width:565.71px;height:1.00px;"></div>
<svg class="i" style="left:365.19px;top:312.29px" width="17.00" height="17.00" viewBox="0 0 16 16"><path d="M2.4 2.2h10" stroke="#111" stroke-width="1"/><text x="1.8" y="13.4" font-family="Liberation Serif,serif" font-style="italic" font-size="21.5" fill="#111">x</text><circle cx="12.2" cy="12.4" r="2.8" fill="url(#gGr)" stroke="#3c9a2c" stroke-width=".5"/><path d="M10.899999999999999 12.4h2.6M12.2 11.1v2.6" stroke="#e9ffe0" stroke-width=".7"/></svg>
<div class="t " style="left:386.37px;top:312.99px;">Head_Si</div>
<div class="t " style="left:550.63px;top:312.99px;">-<span class="inf">∞</span></div>
<div class="t " style="left:600.69px;top:312.99px;"><span class="inf">∞</span></div>
<div class="t " style="left:650.97px;top:312.99px;"><span class="h">#</span>,<span class="h">#</span><span class="h">#</span>0.00</div>
<div class="t " style="left:750.63px;top:312.99px;">N("Si")</div>
<div class="btn" style="left:729.49px;top:311.29px;width:16.57px;height:19.20px;border-radius:1px;border-color:#c0c4cb"></div>
<svg class="i" style="left:734.31px;top:319.79px" width="6.80" height="4.00" viewBox="0 0 6 3.4"><path d="M0 0h6L3 3.4z" fill="#565a62"/></svg>
<div class="ind" style="left:329.34px;top:330.89px;width:15.34px;height:19.00px;"></div>
<div class="" style="left:344.69px;top:330.89px;width:18.74px;height:19.00px;background:#f8f9fa"></div>
<div class="vl" style="left:362.93px;top:330.39px;width:1.00px;height:19.00px;"></div>
<div class="hl" style="left:363.43px;top:348.89px;width:583.31px;height:1.00px;"></div>
<svg class="i" style="left:346.49px;top:331.29px" width="17.00" height="17.00" viewBox="0 0 16 16"><text x="2.6" y="12.8" font-family="Liberation Serif,serif" font-size="16" fill="#111" stroke="#111" stroke-width=".3">Σ</text><circle cx="12.2" cy="12.6" r="2.7" fill="url(#gGr)" stroke="#3c9a2c" stroke-width=".5"/><path d="M10.899999999999999 12.6h2.6M12.2 11.299999999999999v2.6" stroke="#e9ffe0" stroke-width=".7"/></svg>
<div class="t " style="left:367.63px;top:331.99px;">WetTonnes</div>
<div class="t " style="left:550.63px;top:331.99px;">0</div>
<div class="t " style="left:600.69px;top:331.99px;"><span class="inf">∞</span></div>
<div class="t " style="left:650.97px;top:331.99px;"><span class="h">#</span>,<span class="h">#</span><span class="h">#</span>0</div>
<div class="t " style="left:750.63px;top:331.99px;">N("DX")*N("DY")*N("DZ")*N("SG")*(1...</div>
<div class="btn" style="left:729.49px;top:330.29px;width:16.57px;height:19.20px;border-radius:1px;border-color:#c0c4cb"></div>
<svg class="i" style="left:734.31px;top:338.79px" width="6.80" height="4.00" viewBox="0 0 6 3.4"><path d="M0 0h6L3 3.4z" fill="#565a62"/></svg>
<div class="ind" style="left:329.34px;top:349.89px;width:15.34px;height:19.00px;"></div>
<div class="" style="left:344.69px;top:349.89px;width:36.34px;height:19.00px;background:#f8f9fa"></div>
<div class="vl" style="left:380.53px;top:349.39px;width:1.00px;height:19.00px;"></div>
<div class="hl" style="left:381.03px;top:367.89px;width:565.71px;height:1.00px;"></div>
<svg class="i" style="left:365.19px;top:350.29px" width="17.00" height="17.00" viewBox="0 0 16 16"><path d="M2.4 2.2h10" stroke="#111" stroke-width="1"/><text x="1.8" y="13.4" font-family="Liberation Serif,serif" font-style="italic" font-size="21.5" fill="#111">x</text><circle cx="12.2" cy="12.4" r="2.8" fill="url(#gGr)" stroke="#3c9a2c" stroke-width=".5"/><path d="M10.899999999999999 12.4h2.6M12.2 11.1v2.6" stroke="#e9ffe0" stroke-width=".7"/></svg>
<div class="t " style="left:386.37px;top:350.99px;">Moisture</div>
<div class="t " style="left:550.63px;top:350.99px;">0</div>
<div class="t " style="left:600.69px;top:350.99px;"><span class="inf">∞</span></div>
<div class="t " style="left:650.97px;top:350.99px;"><span class="h">#</span>,<span class="h">#</span><span class="h">#</span>0.000</div>
<div class="t " style="left:750.63px;top:350.99px;">N("moi")</div>
<div class="btn" style="left:729.49px;top:349.29px;width:16.57px;height:19.20px;border-radius:1px;border-color:#c0c4cb"></div>
<svg class="i" style="left:734.31px;top:357.79px" width="6.80" height="4.00" viewBox="0 0 6 3.4"><path d="M0 0h6L3 3.4z" fill="#565a62"/></svg>
<svg class="i" style="left:333.46px;top:220.89px" width="6.00" height="11.00" viewBox="0 0 6 11"><path d="M.6.6h4.8M3 .6v9.8M.6 10.4h4.8" stroke="#8d929a" stroke-width=".9" fill="none"/></svg>
<div class="" style="left:545.74px;top:64.09px;width:1.90px;height:304.80px;background:#8a92a0"></div>
<div class="vl" style="left:596.14px;top:83.89px;width:1.00px;height:285.00px;"></div>
<div class="vl" style="left:645.63px;top:83.89px;width:1.00px;height:285.00px;"></div>
<div class="vl" style="left:745.06px;top:83.89px;width:1.00px;height:285.00px;"></div>
<div class="vl" style="left:945.74px;top:83.89px;width:1.00px;height:285.00px;"></div>
<div class="pn" style="left:328.34px;top:492.00px;width:667.43px;height:185.94px;"></div>
<div class="t cap" style="left:333.49px;top:495.74px;">Errors</div>
<svg class="i" style="left:980.23px;top:498.51px" width="7.77" height="9.83" viewBox="0 0 9 11"><path d="M2.2 1.2h4.8M2.7 1.2v5.4M6.4 1.2v5.4M5.6 1.6v4.6M.8 6.7h7.6M4.5 6.7v4" fill="none" stroke="#50555d" stroke-width="1"/></svg>
<div class="gr" style="left:330.63px;top:514.29px;width:662.40px;height:161.60px;"></div>
<div class="ind" style="left:331.63px;top:515.29px;width:14.89px;height:19.11px;"></div>
<svg class="i" style="left:337.23px;top:521.49px" width="4.40" height="7.60" viewBox="0 0 4 7"><path d="M0 0v7L4 3.5z" fill="#5a5f68"/></svg>
<div class="" style="left:364.80px;top:515.29px;width:627.23px;height:19.11px;background:#eceef1"></div>
<div class="hl" style="left:331.63px;top:533.40px;width:660.40px;height:1.00px;"></div>
<svg class="i" style="left:348.23px;top:516.34px" width="16.00" height="16.00" viewBox="0 0 16 16"><circle cx="8" cy="8" r="7.4" fill="url(#gR)" stroke="#a31512" stroke-width=".7"/><path d="M8 3.4v6" stroke="#fff" stroke-width="2.4" stroke-linecap="round"/><circle cx="8" cy="12.1" r="1.35" fill="#fff"/></svg>
<div class="t " style="left:369.60px;top:515.74px;;letter-spacing:0.07px;">Error in block model (pit1a.csv). Error in parcel (ParcelMapping1). You must specify a mapping for field (Parcel).</div>
<div class="pn" style="left:999.20px;top:36.91px;width:356.57px;height:643.09px;"></div>
<div class="t cap" style="left:1004.34px;top:40.66px;">Variables</div>
<svg class="i" style="left:1340.23px;top:43.43px" width="7.77" height="9.83" viewBox="0 0 9 11"><path d="M2.2 1.2h4.8M2.7 1.2v5.4M6.4 1.2v5.4M5.6 1.6v4.6M.8 6.7h7.6M4.5 6.7v4" fill="none" stroke="#50555d" stroke-width="1"/></svg>
<div class="btn" style="left:1003.89px;top:62.17px;width:348.11px;height:21.14px;"></div>
<div class="" style="left:1006.86px;top:65.14px;width:15.77px;height:14.40px;border:1px solid #6f86c4;border-radius:2px;background:#fbfcff"></div>
<div class="t " style="left:1008.69px;top:62.94px;color:#3f8a1e;font-size:14px;letter-spacing:-.6px">c#</div>
<div class="t " style="left:1146.06px;top:63.86px;">Custom Variables</div>
<div class="" style="left:1003.89px;top:88.69px;width:347.66px;height:587.89px;border:1px solid #b3b8c1;border-radius:2px;background:#e9ebee"></div>
<div class="" style="left:1003.89px;top:88.69px;width:347.66px;height:19.20px;border:1px solid #b3b8c1;border-radius:2px 2px 0 0;background:linear-gradient(#e7e9ed,#dcdfe4)"></div>
<div class="t " style="left:1014.86px;top:90.49px;color:#2e3238">Available Variables</div>
<div class="" style="left:1008.46px;top:112.00px;width:338.97px;height:559.09px;border:1px solid #a9aeb8;background:#e2e5ea"></div>
<div class="" style="left:1022.06px;top:125.49px;width:245.14px;height:19.09px;border:1px solid #aab0ba;background:#fff"></div>
<div class="t " style="left:1026.29px;top:126.71px;color:#8c9097;letter-spacing:0.32px;">Enter text to search...</div>
<div class="btn" style="left:1274.51px;top:125.49px;width:59.89px;height:19.09px;"></div>
<div class="t " style="left:1290.97px;top:126.49px;">Clear</div>
<div class="" style="left:1009.46px;top:157.03px;width:336.97px;height:513.37px;background:#fff;border-top:1px solid #a9aeb8"></div>
<div class="hd" style="left:1009.46px;top:158.03px;width:336.97px;height:19.11px;"></div>
<div class="" style="left:1176.94px;top:158.03px;width:1.00px;height:19.11px;background:#b4b9c2"></div>
<div class="t " style="left:1012.80px;top:158.71px;color:#2e3238">As Number</div>
<div class="t " style="left:1182.40px;top:158.71px;color:#2e3238">As Text</div>
<div class="" style="left:1009.46px;top:177.71px;width:167.49px;height:17.94px;background:#000"></div>
<div class="hl" style="left:1009.46px;top:214.36px;width:336.97px;height:1.00px;"></div>
<div class="t nb" style="left:1012.80px;top:197.77px;">N("X")</div>
<div class="t tr" style="left:1182.40px;top:197.77px;">T("X")</div>
<div class="hl" style="left:1009.46px;top:233.34px;width:336.97px;height:1.00px;"></div>
<div class="t nb" style="left:1012.80px;top:216.75px;">N("Y")</div>
<div class="t tr" style="left:1182.40px;top:216.75px;">T("Y")</div>
<div class="hl" style="left:1009.46px;top:252.32px;width:336.97px;height:1.00px;"></div>
<div class="t nb" style="left:1012.80px;top:235.73px;">N("Z")</div>
<div class="t tr" style="left:1182.40px;top:235.73px;">T("Z")</div>
<div class="hl" style="left:1009.46px;top:271.30px;width:336.97px;height:1.00px;"></div>
<div class="t nb" style="left:1012.80px;top:254.71px;">N("DX")</div>
<div class="t tr" style="left:1182.40px;top:254.71px;">T("DX")</div>
<div class="hl" style="left:1009.46px;top:290.28px;width:336.97px;height:1.00px;"></div>
<div class="t nb" style="left:1012.80px;top:273.69px;">N("DY")</div>
<div class="t tr" style="left:1182.40px;top:273.69px;">T("DY")</div>
<div class="hl" style="left:1009.46px;top:309.26px;width:336.97px;height:1.00px;"></div>
<div class="t nb" style="left:1012.80px;top:292.67px;">N("DZ")</div>
<div class="t tr" style="left:1182.40px;top:292.67px;">T("DZ")</div>
<div class="hl" style="left:1009.46px;top:328.24px;width:336.97px;height:1.00px;"></div>
<div class="t nb" style="left:1012.80px;top:311.65px;">N("SG")</div>
<div class="t tr" style="left:1182.40px;top:311.65px;">T("SG")</div>
<div class="hl" style="left:1009.46px;top:347.22px;width:336.97px;height:1.00px;"></div>
<div class="t nb" style="left:1012.80px;top:330.63px;">N("Bearing")</div>
<div class="t tr" style="left:1182.40px;top:330.63px;">T("Bearing")</div>
<div class="hl" style="left:1009.46px;top:366.20px;width:336.97px;height:1.00px;"></div>
<div class="t nb" style="left:1012.80px;top:349.61px;">N("Fe")</div>
<div class="t tr" style="left:1182.40px;top:349.61px;">T("Fe")</div>
<div class="hl" style="left:1009.46px;top:385.18px;width:336.97px;height:1.00px;"></div>
<div class="t nb" style="left:1012.80px;top:368.59px;">N("Al")</div>
<div class="t tr" style="left:1182.40px;top:368.59px;">T("Al")</div>
<div class="hl" style="left:1009.46px;top:404.16px;width:336.97px;height:1.00px;"></div>
<div class="t nb" style="left:1012.80px;top:387.57px;">N("Si")</div>
<div class="t tr" style="left:1182.40px;top:387.57px;">T("Si")</div>
<div class="hl" style="left:1009.46px;top:423.14px;width:336.97px;height:1.00px;"></div>
<div class="t nb" style="left:1012.80px;top:406.55px;">N("lump_pct")</div>
<div class="t tr" style="left:1182.40px;top:406.55px;">T("lump_pct")</div>
<div class="hl" style="left:1009.46px;top:442.12px;width:336.97px;height:1.00px;"></div>
<div class="t nb" style="left:1012.80px;top:425.53px;">N("fines_pct")</div>
<div class="t tr" style="left:1182.40px;top:425.53px;">T("fines_pct")</div>
<div class="hl" style="left:1009.46px;top:461.10px;width:336.97px;height:1.00px;"></div>
<div class="t nb" style="left:1012.80px;top:444.51px;">N("lump_rec")</div>
<div class="t tr" style="left:1182.40px;top:444.51px;">T("lump_rec")</div>
<div class="hl" style="left:1009.46px;top:480.08px;width:336.97px;height:1.00px;"></div>
<div class="t nb" style="left:1012.80px;top:463.49px;">N("fines_rec")</div>
<div class="t tr" style="left:1182.40px;top:463.49px;">T("fines_rec")</div>
<div class="hl" style="left:1009.46px;top:499.06px;width:336.97px;height:1.00px;"></div>
<div class="t nb" style="left:1012.80px;top:482.47px;">N("lump_fe")</div>
<div class="t tr" style="left:1182.40px;top:482.47px;">T("lump_fe")</div>
<div class="hl" style="left:1009.46px;top:518.04px;width:336.97px;height:1.00px;"></div>
<div class="t nb" style="left:1012.80px;top:501.45px;">N("lump_al")</div>
<div class="t tr" style="left:1182.40px;top:501.45px;">T("lump_al")</div>
<div class="hl" style="left:1009.46px;top:537.02px;width:336.97px;height:1.00px;"></div>
<div class="t nb" style="left:1012.80px;top:520.43px;">N("lump_si")</div>
<div class="t tr" style="left:1182.40px;top:520.43px;">T("lump_si")</div>
<div class="hl" style="left:1009.46px;top:556.00px;width:336.97px;height:1.00px;"></div>
<div class="t nb" style="left:1012.80px;top:539.41px;">N("fines_fe")</div>
<div class="t tr" style="left:1182.40px;top:539.41px;">T("fines_fe")</div>
<div class="hl" style="left:1009.46px;top:574.98px;width:336.97px;height:1.00px;"></div>
<div class="t nb" style="left:1012.80px;top:558.39px;">N("fines_al")</div>
<div class="t tr" style="left:1182.40px;top:558.39px;">T("fines_al")</div>
<div class="hl" style="left:1009.46px;top:593.96px;width:336.97px;height:1.00px;"></div>
<div class="t nb" style="left:1012.80px;top:577.37px;">N("fines_si")</div>
<div class="t tr" style="left:1182.40px;top:577.37px;">T("fines_si")</div>
<div class="hl" style="left:1009.46px;top:612.94px;width:336.97px;height:1.00px;"></div>
<div class="t nb" style="left:1012.80px;top:596.35px;">N("moi")</div>
<div class="t tr" style="left:1182.40px;top:596.35px;">T("moi")</div>
<div class="hl" style="left:1009.46px;top:631.92px;width:336.97px;height:1.00px;"></div>
<div class="t nb" style="left:1012.80px;top:615.33px;">N("blockId")</div>
<div class="t tr" style="left:1182.40px;top:615.33px;">T("blockId")</div>
<div class="vl" style="left:1176.94px;top:177.14px;width:1.00px;height:455.78px;"></div>
<div class="" style="left:1178.97px;top:177.37px;width:166.17px;height:20.11px;border:2.3px solid #e6173f;border-radius:3px;background:#fff"></div>
<div class="t " style="left:1183.09px;top:178.60px;color:#8c1414;font-weight:bold;font-size:12.2px;letter-spacing:0.42px;">CustomT("CustomTextVar")</div>
<svg class="i" style="left:0;top:0" width="1371" height="721" viewBox="0 0 1371 721"><path d="M1178.7 190.3L801.2 223.8" stroke="#ee1440" stroke-width="1.8" fill="none"/><g transform="translate(795.2 224.3) rotate(-5.07)"><path d="M0 0L12.4 -4.4L9.4 0L12.4 4.4z" fill="#ee1440"/></g></svg>
<div class="btn" style="left:1180.57px;top:689.37px;width:73.37px;height:21.03px;"></div>
<div class="t " style="left:1201.14px;top:692.31px;">Cancel</div>
<div class="btn" style="left:1258.63px;top:689.37px;width:101.71px;height:21.03px;"></div>
<svg class="i" style="left:1263.77px;top:692.80px" width="13.26" height="13.26" viewBox="0 0 14.6 15"><path d="M1.2 1L13.4 7.5 1.2 14z" fill="url(#gP)" stroke="#2f6fc6" stroke-width="1.3" stroke-linejoin="round"/></svg>
<div class="t " style="left:1295.54px;top:692.31px;">Generate</div>
</div>
</body></html>
